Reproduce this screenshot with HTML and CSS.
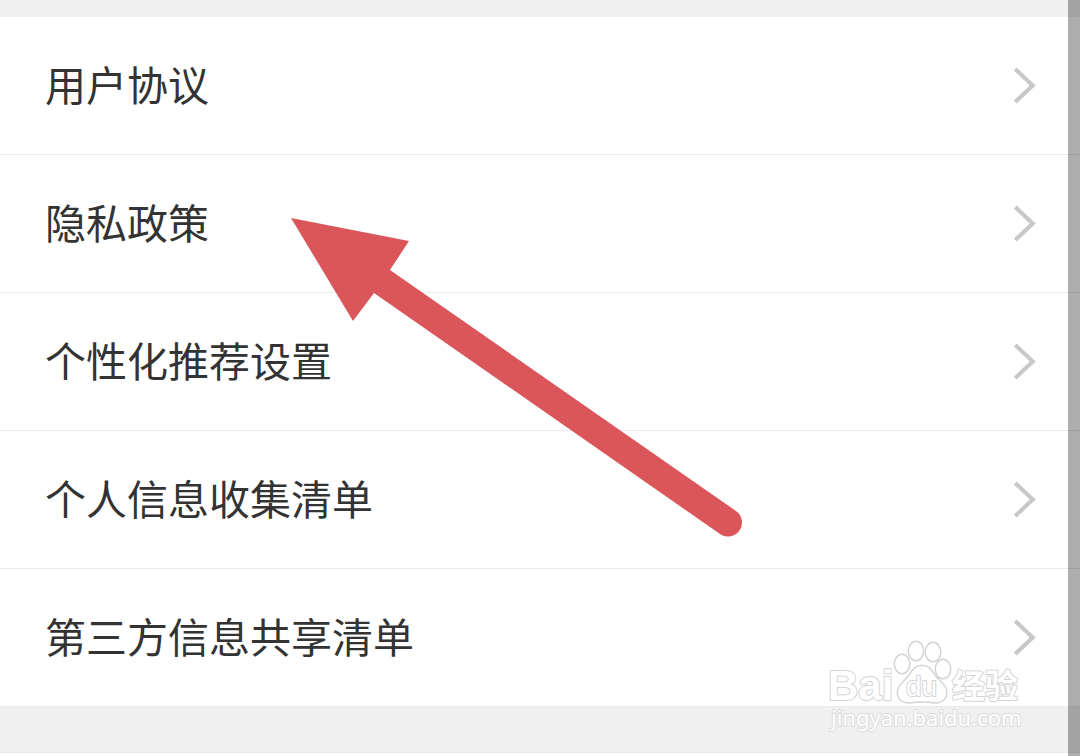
FILE: index.html
```html
<!DOCTYPE html>
<html lang="zh-CN">
<head>
    <meta charset="UTF-8">
    <meta name="viewport" content="width=device-width, initial-scale=1.0">
    <title>隐私政策</title>
    <link rel="stylesheet" href="styles.css">
</head>
<body>

    <nav class="settings">
        <a class="row" href="#agreement">
            <span class="label">用户协议</span>
            <svg class="chevron" viewBox="0 0 22 36" aria-hidden="true"><path d="M2 2L19 18L2 34"/></svg>
        </a>
        <a class="row" href="#privacy">
            <span class="label">隐私政策</span>
            <svg class="chevron" viewBox="0 0 22 36" aria-hidden="true"><path d="M2 2L19 18L2 34"/></svg>
        </a>
        <a class="row" href="#recommend">
            <span class="label">个性化推荐设置</span>
            <svg class="chevron" viewBox="0 0 22 36" aria-hidden="true"><path d="M2 2L19 18L2 34"/></svg>
        </a>
        <a class="row" href="#collected">
            <span class="label">个人信息收集清单</span>
            <svg class="chevron" viewBox="0 0 22 36" aria-hidden="true"><path d="M2 2L19 18L2 34"/></svg>
        </a>
        <a class="row" href="#shared">
            <span class="label">第三方信息共享清单</span>
            <svg class="chevron" viewBox="0 0 22 36" aria-hidden="true"><path d="M2 2L19 18L2 34"/></svg>
        </a>
    </nav>
    <div class="footer-gap"></div>

    <!-- Arrow pointing at the privacy row -->
    <svg class="arrow" viewBox="290 217 454 321" aria-hidden="true">
        <path d="M291 218L409 241L390 270L736 511A14 14 0 0 1 720 534L374 293L353 321Z"/>
    </svg>

    <!-- Watermark -->
    <svg class="watermark" viewBox="0 0 200 98" role="img" aria-label="Baidu 经验">
        <text class="brand" x="0" y="64">Bai</text>
        <g class="paw">
            <ellipse cx="74" cy="28" rx="7" ry="9"/>
            <ellipse cx="88" cy="15" rx="7" ry="9"/>
            <ellipse cx="105" cy="16" rx="7" ry="9"/>
            <ellipse cx="115" cy="33" rx="7" ry="9"/>
            <path d="M94 30C88 30 85 34 82 39C79 44 71 48 70 56C70 64 76 67 83 66C90 65 98 65 105 66C113 67 119 63 118 55C117 48 109 44 106 39C103 34 100 30 94 30Z"/>
        </g>
        <text class="paw-text" x="78" y="60">du</text>
        <text class="brand-cn" x="124" y="62">经验</text>
        <text class="site" x="3" y="90">jingyan.baidu.com</text>
    </svg>

    <div class="edge"></div>

</body>
</html>
```
FILE: styles.css
```css
body {
    margin: 0;
    background-color: #fff;
    color: #333;
    font-family: "Noto Sans CJK SC", sans-serif;
}

.settings {
    border-top: 17px solid #f0f0f0;
}

.row {
    display: flex;
    align-items: center;
    justify-content: space-between;
    box-sizing: border-box;
    min-height: 138px;
    padding: 0 44px 0 45px;
    border-bottom: 1px solid #ebebeb;
    color: #333;
    font-size: 41px;
    line-height: 60px;
    text-decoration: none;
}

.label {
    padding-bottom: 6px;
}

.chevron {
    width: 23px;
    height: 37px;
    fill: none;
    stroke: #c8c8c8;
    stroke-width: 4;
}

.footer-gap {
    height: 45px;
    background-color: #f0f0f0;
    border-bottom: 1px solid #e8e8e8;
}

.arrow {
    position: absolute;
    left: 290px;
    top: 217px;
    width: 454px;
    height: 321px;
    fill: #db565b;
    pointer-events: none;
}

.watermark {
    position: absolute;
    right: 52px;
    top: 636px;
    width: 200px;
    height: 98px;
    fill: #fff;
    stroke: #d4d4d4;
    stroke-width: 2;
    stroke-linejoin: round;
    paint-order: stroke;
    pointer-events: none;
}

.paw {
    stroke-width: 3;
}

.brand {
    font: bold 42px "Liberation Sans", sans-serif;
}

.paw-text {
    font: 28px "Liberation Sans", sans-serif;
}

.brand-cn {
    font: bold 33px "Noto Sans CJK SC", sans-serif;
}

.site {
    font: 22px "Noto Sans", sans-serif;
    stroke: #dcdcdc;
}

/* Shaded strip down the right side */
.edge {
    position: fixed;
    top: 0;
    right: 0;
    bottom: 0;
    width: 12px;
    background-color: rgba(0, 0, 0, 0.32);
}
```
